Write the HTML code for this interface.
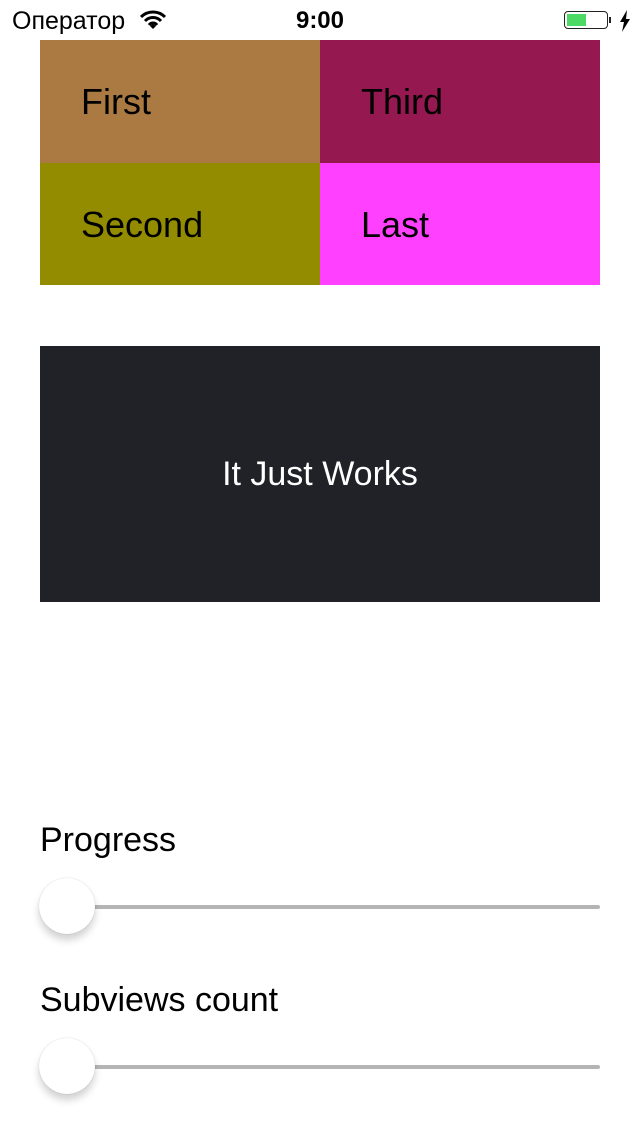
<!DOCTYPE html><html><head><style>
body{margin:0;width:640px;height:1136px;background:#fff;position:relative;font-family:"Liberation Sans","DejaVu Sans",sans-serif;overflow:hidden}
.a{position:absolute}
.c{position:absolute;font-size:36px;color:#000;line-height:1}
.tr{position:absolute;left:66px;width:534px;height:4px;background:#b5b5b5;border-radius:2px}
.th{position:absolute;left:39px;width:56px;height:56px;border-radius:50%;background:#fff;box-shadow:0 6px 8px rgba(0,0,0,.18),0 0 1px rgba(0,0,0,.25)}
</style></head><body>
<div class="a" style="left:12px;top:7px;font-size:25px">Оператор</div>
<svg class="a" style="left:140px;top:10px" width="26" height="20" viewBox="0 0 26 20"><path d="M1 7a17 17 0 0 1 24 0M5 11a11 11 0 0 1 16 0M9 15a5 5 0 0 1 8 0" stroke="#000" stroke-width="3" fill="none"/><path d="M13 19l-3-3 3-2 3 2z" fill="#000"/></svg>
<div class="a" style="left:0;width:640px;text-align:center;top:7px;font-size:24px;font-weight:bold">9:00</div>
<div class="a" style="left:564px;top:11px;width:44px;height:18px;border:1.5px solid #222;border-radius:4px;box-sizing:border-box"></div>
<div class="a" style="left:567px;top:14px;width:19px;height:12px;background:#4cd964"></div>
<div class="a" style="left:609px;top:17px;width:2px;height:6px;background:#222"></div>
<svg class="a" style="left:619px;top:10px" width="12" height="22" viewBox="0 0 12 22"><path d="M8 0L1 12h4l-2 10 8-13H7z" fill="#000"/></svg>
<div class="a" style="left:40px;top:40px;width:280px;height:123px;background:#ab7a42"></div>
<div class="a" style="left:320px;top:40px;width:280px;height:123px;background:#961850"></div>
<div class="a" style="left:40px;top:163px;width:280px;height:122px;background:#938c00"></div>
<div class="a" style="left:320px;top:163px;width:280px;height:122px;background:#ff40ff"></div>
<div class="c" style="left:81px;top:84px">First</div>
<div class="c" style="left:361px;top:84px">Third</div>
<div class="c" style="left:81px;top:207px">Second</div>
<div class="c" style="left:361px;top:207px">Last</div>
<div class="a" style="left:40px;top:346px;width:560px;height:256px;background:#212227"></div>
<div class="c" style="left:40px;width:560px;text-align:center;top:457px;color:#fff;font-size:34px">It Just Works</div>
<div class="a" style="left:40px;top:821px;font-size:34px">Progress</div>
<div class="tr" style="top:905px"></div><div class="th" style="top:878px"></div>
<div class="a" style="left:40px;top:981px;font-size:34px">Subviews count</div>
<div class="tr" style="top:1065px"></div><div class="th" style="top:1038px"></div>
</body></html>
